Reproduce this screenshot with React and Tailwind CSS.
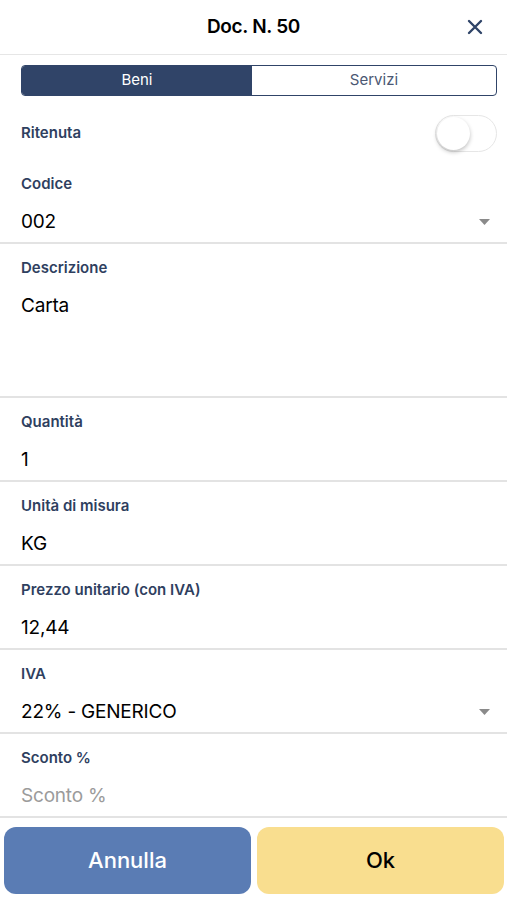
import React from "react";

const Caret = () => (
  <svg width="11" height="6" viewBox="0 0 11 6" className="shrink-0">
    <path d="M0 0h11L5.5 6z" fill="#8a8a8a" />
  </svg>
);

const Field = ({ label, value, placeholder, select, tall }) => (
  <div
    className={`border-b-2 border-[#e3e3e3] pl-[21px] pr-[17px] pt-[15px] ${
      tall ? "h-[154px]" : "h-[84px]"
    }`}
  >
    <div className="h-[18px] text-[15px] leading-[18px] font-semibold text-[#2f3f5f]">
      {label}
    </div>
    <div className="mt-[17px] flex h-[24px] items-center justify-between">
      <span
        className={`text-[19px] leading-[24px] tracking-[-0.2px] ${
          value ? "text-black" : "text-[#9b9b9b]"
        }`}
      >
        {value || placeholder}
      </span>
      {select && <Caret />}
    </div>
  </div>
);

export default function App() {
  return (
    <div
      className="flex h-[900px] w-[507px] flex-col bg-white"
      style={{ fontFamily: "Inter, 'Noto Sans', sans-serif" }}
    >
      <header className="grid h-[55px] grid-cols-[1fr_auto_1fr] items-center border-b border-[#e6e6e6]">
        <span />
        <h1 className="text-[19px] font-semibold tracking-[-0.3px] text-black">
          Doc. N. 50
        </h1>
        <div className="flex justify-end pr-[24px]">
          <svg width="16" height="16" viewBox="0 0 16 16">
            <path
              d="M2 2l12 12M14 2L2 14"
              stroke="#2f4468"
              strokeWidth="2.4"
              strokeLinecap="round"
            />
          </svg>
        </div>
      </header>

      <div className="ml-[21px] mr-[10px] mt-[10px] flex h-[31px] overflow-hidden rounded-[4px] border-[1.5px] border-[#304468] text-[15px]">
        <div className="flex w-[48.5%] items-center justify-center bg-[#304468] text-white">
          Beni
        </div>
        <div className="flex flex-1 items-center justify-center text-[#4b5873]">
          Servizi
        </div>
      </div>

      <div className="flex items-center justify-between pt-[19px] pb-[8px] pl-[21px] pr-[10px]">
        <span className="text-[15px] font-semibold text-[#2f3f5f]">Ritenuta</span>
        <div className="relative h-[37px] w-[62px] rounded-full border border-[#e6e6e6] bg-white">
          <div className="absolute left-[1px] top-[1px] h-[33px] w-[33px] rounded-full bg-white shadow-[0_2px_4px_rgba(0,0,0,0.25)]" />
        </div>
      </div>

      <Field label="Codice" value="002" select />
      <Field label="Descrizione" value="Carta" tall />
      <Field label="Quantità" value="1" />
      <Field label="Unità di misura" value="KG" />
      <Field label="Prezzo unitario (con IVA)" value="12,44" />
      <Field label="IVA" value="22% - GENERICO" select />
      <Field label="Sconto %" placeholder="Sconto %" />

      <div className="mt-[9px] flex gap-[6px] pl-[4px] pr-[3px]">
        <button className="flex h-[67px] flex-1 items-center justify-center rounded-[12px] bg-[#5a7cb4] text-[22px] font-medium text-white">
          Annulla
        </button>
        <button className="flex h-[67px] flex-1 items-center justify-center rounded-[12px] bg-[#f9de8f] text-[22px] font-medium text-black">
          Ok
        </button>
      </div>
    </div>
  );
}
